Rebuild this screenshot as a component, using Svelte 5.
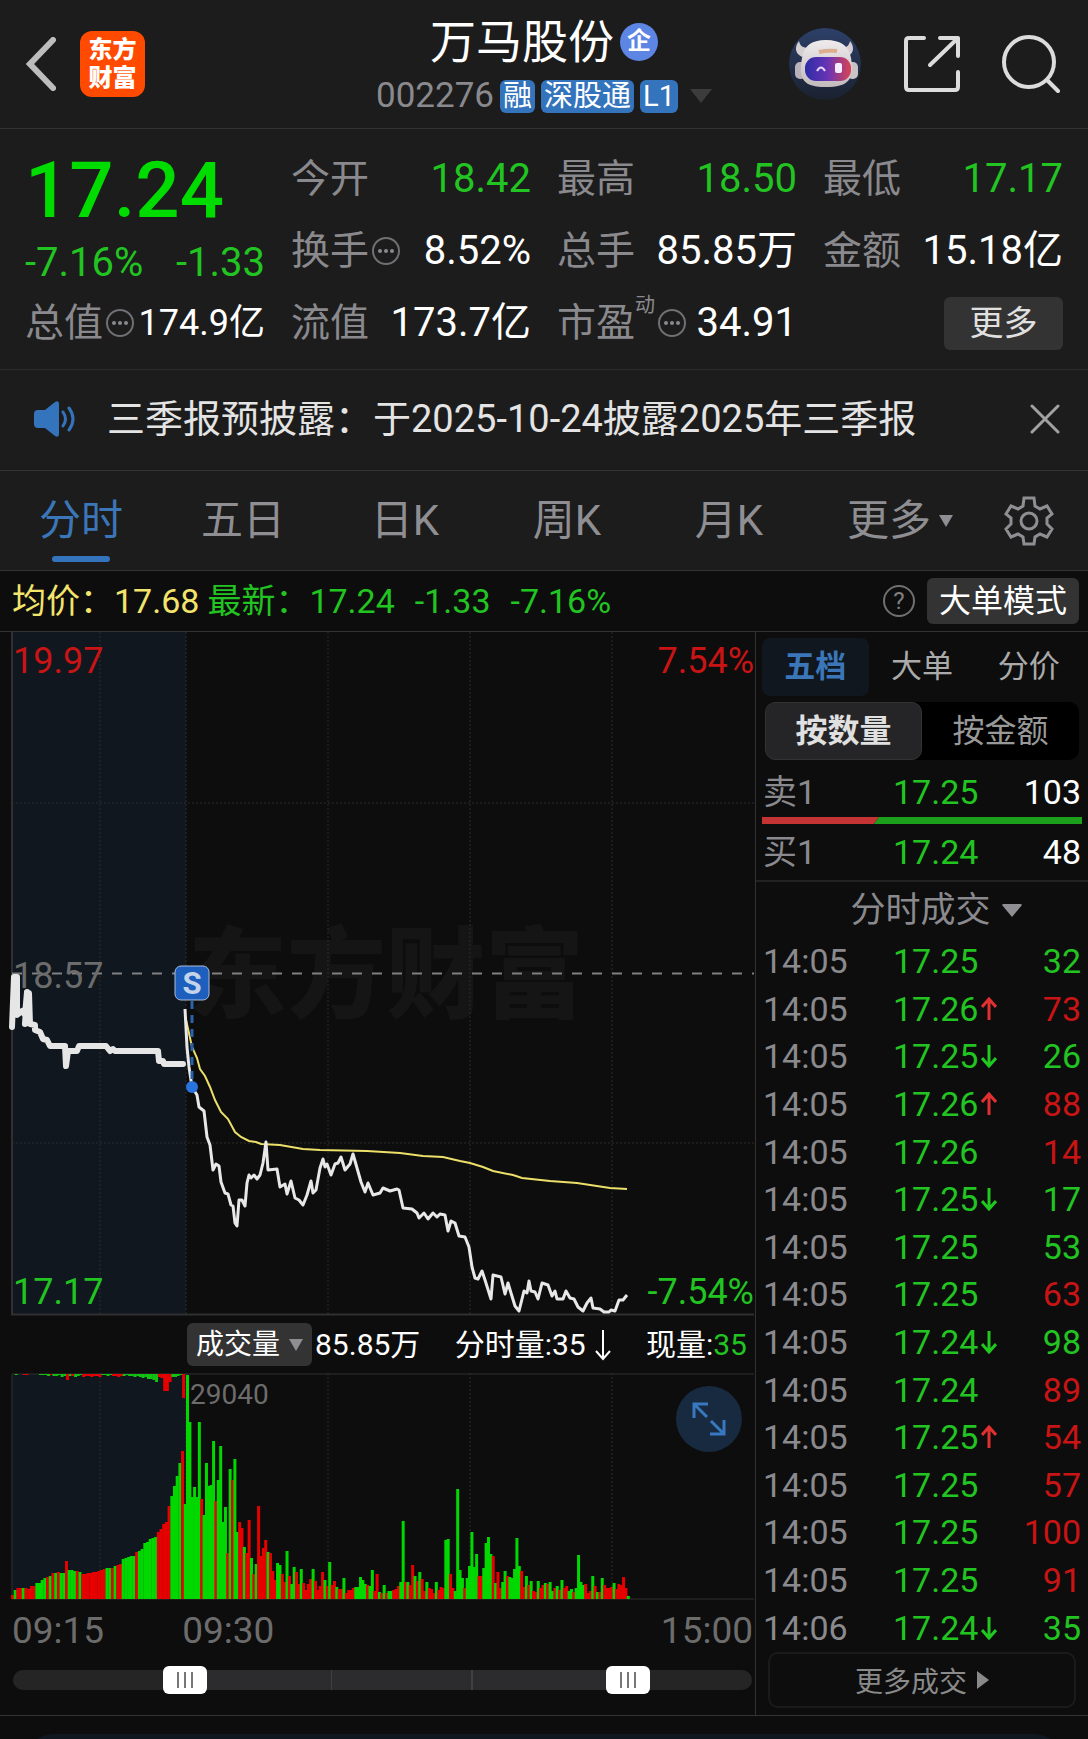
<script>
  // prices below yesterday's close are green, above are red
  const stats = [
    { label: "今开", value: "18.42", down: true },
    { label: "最高", value: "18.50", down: true },
    { label: "最低", value: "17.17", down: true },
    { label: "换手", value: "8.52%", info: true },
    { label: "总手", value: "85.85万" },
    { label: "金额", value: "15.18亿" },
    { label: "总值", value: "174.9亿", info: true, small: true },
    { label: "流值", value: "173.7亿" },
    { label: "市盈", value: "34.91", info: true, sup: "动" },
  ];

  const periods = ["分时", "五日", "日K", "周K", "月K"];
  let period = "分时";

  const bookTabs = ["五档", "大单", "分价"];
  let bookTab = "五档";
  let unit = "按数量";

  // dir: arrow beside the price, side: colour of the quantity
  const trades = [
    { t: "14:05", p: "17.25", q: 32, side: "g" },
    { t: "14:05", p: "17.26", q: 73, side: "r", dir: "up" },
    { t: "14:05", p: "17.25", q: 26, side: "g", dir: "down" },
    { t: "14:05", p: "17.26", q: 88, side: "r", dir: "up" },
    { t: "14:05", p: "17.26", q: 14, side: "r" },
    { t: "14:05", p: "17.25", q: 17, side: "g", dir: "down" },
    { t: "14:05", p: "17.25", q: 53, side: "g" },
    { t: "14:05", p: "17.25", q: 63, side: "r" },
    { t: "14:05", p: "17.24", q: 98, side: "g", dir: "down" },
    { t: "14:05", p: "17.24", q: 89, side: "r" },
    { t: "14:05", p: "17.25", q: 54, side: "r", dir: "up" },
    { t: "14:05", p: "17.25", q: 57, side: "r" },
    { t: "14:05", p: "17.25", q: 100, side: "r" },
    { t: "14:05", p: "17.25", q: 91, side: "r" },
    { t: "14:06", p: "17.24", q: 35, side: "g", dir: "down" },
  ];

  const auctionLine = "12,395 14,345 17,345 17,383 22,379 25,383 27,360 25,392 29,361 30,392 35,393 35,398 40,400 43,407 47,408 50,414 65,414 66,434 68,419 77,419 79,414 106,414 110,419 113,417 115,419 158,419 159,429 163,429 164,432 183,432";
  const priceLine = "185,377 187,415 189,435 192,455 197,463 199,475 204,479 207,505 210,513 213,538 216,532 219,534 221,550 225,561 228,562 231,573 233,574 235,591 237,594 239,568 242,568 245,574 247,551 249,543 251,546 254,543 257,547 260,543 263,531 266,510 268,538 277,537 280,555 285,552 287,562 291,549 295,566 299,568 303,573 307,563 311,549 313,561 316,558 320,536 323,527 325,535 327,532 331,543 335,532 338,531 341,525 345,538 350,532 353,522 357,536 361,550 365,560 368,551 373,563 380,561 383,556 390,559 397,557 399,558 403,576 412,577 417,581 419,586 424,581 428,587 433,581 437,585 440,582 445,583 448,599 451,589 455,591 459,604 465,605 469,615 472,635 475,646 478,647 482,639 485,648 491,667 493,643 501,645 505,662 508,651 511,661 515,674 519,679 524,659 527,661 529,649 531,659 535,660 538,667 542,651 548,653 552,664 555,659 557,667 563,667 566,659 570,666 574,667 578,675 583,679 587,671 591,666 593,676 600,677 604,680 609,680 611,678 615,679 619,668 623,668 627,663";
  const avgLine = "185,383 192,415 197,426 200,437 205,444 210,455 215,468 221,480 228,487 235,500 241,505 249,509 256,510 261,512 280,513 303,517 320,518 367,519 400,521 423,524 443,525 460,529 470,531 483,535 493,539 513,543 522,546 550,549 577,551 610,556 627,557";

  // colour letter + bar height
  const auctionVol = "r4 g9 r11 r11 g11 r11 r10 r13 r13 g16 g16 g19 g21 r22 g23 r26 g26 r27 g26 g26 r38 g29 g29 g28 r28 g27 r25 r25 r26 r26 r27 r27 r28 r29 r30 g31 g31 r31 g33 r34 r35 g40 g41 g42 g43 g43 r47 g48 g50 g56 g57 g60 g61 g62 r67 r70 r75 r77 r93 g103 g113 g123 g136 r148 g95";
  const auctionLeft = "g0 g1 g0 g0 r1 r1 g0 g0 g0 g0 g1 g1 g1 g2 r1 g2 g2 g1 g3 g2 r6 g2 r2 g3 g2 g1 r3 r2 r2 r3 r2 r2 r3 g1 g1 g2 g1 r2 r2 r3 r2 g2 g1 g2 g2 g3 g2 g3 g4 g3 g5 g5 g6 g8 r3 r4 r17 r17 r8 g3 g3 g2 g1 r24";
  const minuteVol = "g224 g177 g102 g112 g102 g177 r100 g84 g136 g113 g114 g158 r98 g119 g153 g77 g92 r46 g130 r119 g140 g67 r77 r71 g52 r46 r79 g41 r25 g35 r93 r43 r51 r59 g47 r46 r28 r19 g36 g34 r25 r17 g48 r23 g15 g32 r27 r15 g30 r16 r9 r15 r20 g30 r18 r9 r13 r27 g19 r13 g37 r14 r18 g12 r10 r10 g21 r6 r9 r9 r11 g12 g12 g22 g19 g15 r14 g13 g29 r8 r25 g7 r6 g14 r6 g8 g8 r9 r10 r13 g17 g78 r17 g17 r14 r34 g23 r18 g27 r20 r8 g17 r11 r10 r6 g17 r9 r12 r11 g59 g60 r25 r11 g8 g110 g29 g21 r11 g21 g33 g67 g32 g45 r23 r23 g31 g56 g62 g45 r43 g16 r27 r11 g17 g28 r23 g22 g21 g30 g61 g33 r28 r12 g23 r14 g18 r8 r7 g18 r11 r14 g16 r15 g17 g8 r11 g13 r9 g19 r11 r13 g8 g10 r7 g11 g44 g17 g14 r15 r6 r8 g23 r13 g7 r7 g21 r14 r11 r11 r12 g16 r10 r15 r14 r22 r11 g3";

  const bars = (src, x0, step) =>
    src.split(" ").map((s, i) => ({ x: x0 + i * step, h: +s.slice(1), c: s[0] }));

  const upper = bars(auctionLeft, 12, 2.7);
  const lower = [...bars(auctionVol, 11, 2.7), ...bars(minuteVol, 186, 2.37)];
  const gridX = [100, 186, 328, 470, 612];

  let from = 216;
  let to = 853;
</script>

<div class="app">
  <header class="top">
    <div class="top-left">
      <button class="icon-btn" aria-label="返回">
        <svg width="30" height="54" viewBox="0 0 30 54"><path d="M27 3 4 27l23 24" fill="none" stroke="#bdbdbd" stroke-width="6" stroke-linecap="round" /></svg>
      </button>
      <a class="logo" href="#home"><span>东方</span><span>财富</span></a>
    </div>
    <div class="top-mid">
      <h1>万马股份<span class="qi">企</span></h1>
      <div class="code">
        <span>002276</span>
        <span class="tag">融</span>
        <span class="tag">深股通</span>
        <span class="tag">L1</span>
        <svg class="code-caret" width="22" height="14" viewBox="0 0 22 14"><path d="M0 0h22L11 14z" fill="#3c3c3c" /></svg>
      </div>
    </div>
    <div class="top-right">
      <button class="icon-btn" aria-label="助手">
        <svg width="73" height="73" viewBox="0 0 73 73">
          <defs>
            <linearGradient id="sky" x1="0" y1="0" x2="0" y2="1"><stop offset="0" stop-color="#2d4068" /><stop offset="1" stop-color="#1a2130" /></linearGradient>
            <linearGradient id="visor" x1="0" y1="0" x2="1" y2="0"><stop offset="0" stop-color="#2c2ca6" /><stop offset=".5" stop-color="#6a34b4" /><stop offset="1" stop-color="#d84452" /></linearGradient>
            <linearGradient id="shell" x1="0" y1="0" x2="0" y2="1"><stop offset="0" stop-color="#efebec" /><stop offset="1" stop-color="#c2babd" /></linearGradient>
          </defs>
          <circle cx="36" cy="36" r="36" fill="url(#sky)" />
          <path d="M10 13c-4 5-5 12 3 16l7-9c-6 0-9-2-10-7zM61 13c4 5 5 12-3 16l-7-9c6 0 9-2 10-7z" fill="#d5cfd3" />
          <rect x="6" y="34" width="11" height="17" rx="5" fill="#b9b2b8" />
          <rect x="58" y="34" width="11" height="17" rx="5" fill="#c9c3c8" />
          <path d="M37 12c15 0 23 6 25 18 4 22-3 29-25 29S9 52 13 30c2-12 9-18 24-18z" fill="url(#shell)" />
          <rect x="16" y="29" width="46" height="24" rx="11" fill="url(#visor)" />
          <path d="M30 24q9-2 18-1" stroke="#dcae90" stroke-width="4" fill="none" />
          <path d="M28 43q4-7 8 0" stroke="#e6d8ff" stroke-width="2" fill="none" />
          <rect x="46" y="35" width="7" height="10" rx="2" fill="#f4ecff" />
        </svg>
      </button>
      <button class="icon-btn" aria-label="分享">
        <svg width="56" height="56" viewBox="0 0 56 56" fill="none" stroke="#dcdcdc" stroke-width="4" stroke-linecap="round" stroke-linejoin="round"><path d="M20 2H5q-3 0-3 3v46q0 3 3 3h46q3 0 3-3V36" /><path d="M36 2h18v18M53 3 26 29" /></svg>
      </button>
      <button class="icon-btn" aria-label="搜索">
        <svg width="58" height="58" viewBox="0 0 58 58" fill="none" stroke="#dcdcdc" stroke-width="4" stroke-linecap="round"><circle cx="27" cy="27" r="25" /><path d="m45 45 11 11" /></svg>
      </button>
    </div>
  </header>

  <section class="stats">
    <div class="now">
      <strong>17.24</strong>
      <div class="change"><span>-7.16%</span><span>-1.33</span></div>
    </div>
    {#each stats as s}
      <div class="stat" class:small={s.small}>
        <span class="label">
          {s.label}{#if s.sup}<sup>{s.sup}</sup>{/if}
          {#if s.info}
            <svg class="info" width="30" height="30" viewBox="0 0 30 30"><circle cx="15" cy="15" r="13" fill="none" stroke="#707074" stroke-width="2" /><g fill="#8a8a8e"><circle cx="9" cy="15" r="2" /><circle cx="15" cy="15" r="2" /><circle cx="21" cy="15" r="2" /></g></svg>
          {/if}
        </span>
        <span class="value" class:down={s.down}>{s.value}</span>
      </div>
    {/each}
    <button class="more-stats">更多</button>
  </section>

  <section class="notice">
    <svg width="44" height="36" viewBox="0 0 44 36"><path d="M5 9h7L22 1q4-2 4 2v30q0 4-4 2l-10-8H5q-4 0-4-4V13q0-4 4-4z" fill="#3474bd" /><path d="M30 11q5 7 0 14M36 7q8 11 0 22" fill="none" stroke="#3474bd" stroke-width="3" stroke-linecap="round" /></svg>
    <p>三季报预披露：于2025-10-24披露2025年三季报</p>
    <button class="icon-btn" aria-label="关闭">
      <svg width="30" height="30" viewBox="0 0 30 30"><path d="m2 2 26 26M28 2 2 28" stroke="#a2a2a2" stroke-width="3" stroke-linecap="round" /></svg>
    </button>
  </section>

  <nav class="periods">
    {#each periods as p}
      <button class:on={p === period} on:click={() => (period = p)}>{p}</button>
    {/each}
    <button class="more">更多<svg width="14" height="12" viewBox="0 0 14 12"><path d="M0 0h14L7 12z" fill="#8e8e93" /></svg></button>
    <button class="gear" aria-label="设置">
      <svg width="50" height="50" viewBox="0 0 50 50" fill="none" stroke="#8e8e93" stroke-width="3">
        <path d="M20 2h10l1 8 5 3 7-3 5 8-5 4v6l5 5-5 8-7-3-5 3-1 7H20l-1-7-5-3-7 3-5-8 5-5v-6l-5-4 5-8 7 3 5-3z" />
        <circle cx="25" cy="25" r="8" />
      </svg>
    </button>
  </nav>

  <section class="quote">
    <span class="avg">均价：17.68</span>
    <span class="last">最新：17.24</span>
    <span class="last delta">-1.33</span>
    <span class="last delta">-7.16%</span>
    <button class="help" aria-label="说明">?</button>
    <button class="big-order">大单模式</button>
  </section>

  <main>
    <div class="charts">
      <svg class="chart" viewBox="0 0 755 684">
        <rect x="12" y="0" width="174" height="682" fill="#10171e" />
        <text class="mark" x="188" y="378">东方财富</text>
        {#each gridX as x}
          <line class="dots" x1={x} x2={x} y1="0" y2="682" />
        {/each}
        <line class="dots" x1="12" x2="754" y1="171" y2="171" />
        <line class="dots" x1="12" x2="754" y1="511" y2="511" />
        <path d="M12 0v682.500h742" fill="none" stroke="#303032" stroke-width="2" />
        <line x1="12" x2="754" y1="341.500" y2="341.500" stroke="#808080" stroke-width="2" stroke-dasharray="10 10" />
        <text class="axis grey" x="13" y="356">18.57</text>
        <polyline points={auctionLine} fill="none" stroke="#e6e6e6" stroke-width="6" stroke-linecap="round" stroke-linejoin="round" />
        <polyline points={avgLine} fill="none" stroke="#ece06a" stroke-width="2" />
        <polyline points={priceLine} fill="none" stroke="#e8e8e8" stroke-width="3" stroke-linejoin="round" />
        <line x1="192" x2="192" y1="369" y2="450" stroke="#2a62ad" stroke-width="3" stroke-dasharray="8 6" />
        <circle cx="192" cy="455" r="6" fill="#2873dc" />
        <rect x="175" y="334" width="34" height="34" rx="6" fill="#1e5fbe" stroke="#a9bddb" stroke-width="1" />
        <text class="sell" x="192" y="362">S</text>
        <text class="axis red" x="13" y="41">19.97</text>
        <text class="axis red end" x="754" y="41">7.54%</text>
        <text class="axis green" x="13" y="672">17.17</text>
        <text class="axis green end" x="754" y="672">-7.54%</text>
      </svg>

      <div class="vol-head">
        <label class="vol-pick">
          <select aria-label="指标"><option>成交量</option></select>
          <svg width="14" height="12" viewBox="0 0 14 12"><path d="M0 0h14L7 12z" fill="#8e8e93" /></svg>
        </label>
        <span>85.85万</span>
        <span class="minute">分时量:35<svg width="18" height="32" viewBox="0 0 18 32"><path d="M9 1v28M2 22l7 8 7-8" fill="none" stroke="#fff" stroke-width="2" /></svg></span>
        <span class="cur">现量:<b>35</b></span>
      </div>

      <div class="vol">
        <svg class="chart" viewBox="0 0 755 227">
          <rect x="12" y="1" width="174" height="225" fill="#10171e" />
          {#each gridX as x}
            <line class="dots" x1={x} x2={x} y1="0" y2="226" />
          {/each}
          <path d="M12 226V1h742M12 226h742" fill="none" stroke="#303032" stroke-width="1" />
          {#each upper as b}
            <rect x={b.x} y="1" width="3" height={b.h} fill={b.c === "r" ? "#e60000" : "#12c412"} />
          {/each}
          {#each lower as b}
            <rect x={b.x} y={226 - b.h} width="3" height={b.h} fill={b.c === "r" ? "#e60000" : "#00d800"} />
          {/each}
          <text class="peak" x="190" y="31">29040</text>
        </svg>
        <button class="expand" aria-label="全屏">
          <svg width="34" height="34" viewBox="0 0 34 34" fill="none" stroke="#3878c0" stroke-width="3"><path d="M2 16V2h14M2 2l13 13M32 18v14H18M32 32 19 19" /></svg>
        </button>
      </div>

      <div class="times"><span>09:15</span><span>09:30</span><span>15:00</span></div>

      <div class="range">
        <input type="range" min="0" max="1000" bind:value={from} aria-label="起始时间" />
        <input type="range" min="0" max="1000" bind:value={to} aria-label="结束时间" />
      </div>
    </div>

    <aside>
      <div class="book-tabs">
        {#each bookTabs as b}
          <button class:on={b === bookTab} on:click={() => (bookTab = b)}>{b}</button>
        {/each}
      </div>
      <div class="units">
        {#each ["按数量", "按金额"] as u}
          <button class:on={u === unit} on:click={() => (unit = u)}>{u}</button>
        {/each}
      </div>
      <div class="level"><span>卖1</span><span class="p">17.25</span><span class="q">103</span></div>
      <svg class="ratio" viewBox="0 0 320 7"><path d="M0 0h117l-5 7H0z" fill="#c43434" /><path d="M117 0h203v7H112z" fill="#1ca01c" /></svg>
      <div class="level"><span>买1</span><span class="p">17.24</span><span class="q">48</span></div>
      <label class="trade-pick">
        <select aria-label="成交类型"><option>分时成交</option></select>
        <svg width="20" height="13" viewBox="0 0 20 13"><path d="M1 0h18l1 1-10 12L0 1z" fill="#8e8e93" /></svg>
      </label>
      <table>
        <tbody>
          {#each trades as t}
            <tr>
              <td class="t">{t.t}</td>
              <td class="p">
                {t.p}{#if t.dir}<svg width="16" height="24" viewBox="0 0 16 24" fill="none" stroke-width="3" stroke={t.dir === "up" ? "#e03030" : "#20c820"}><path d={t.dir === "up" ? "M8 23V3M1 10l7-8 7 8" : "M8 1v20M1 14l7 8 7-8"} /></svg>{/if}
              </td>
              <td class="q {t.side}">{t.q}</td>
            </tr>
          {/each}
        </tbody>
      </table>
      <button class="more-trades">更多成交<svg width="12" height="18" viewBox="0 0 12 18"><path d="M0 0v18l12-9z" fill="#8a8a8a" /></svg></button>
    </aside>
  </main>

  <footer><div class="sheet"></div></footer>
</div>

<style>
  :global(body) { background: #0d0d0d; }
  .app { font-family: Roboto, "Noto Sans CJK SC", sans-serif; color: #fff; background: #0d0d0d; overflow: hidden; }
  button, select { font: inherit; color: inherit; background: none; border: none; padding: 0; margin: 0; cursor: pointer; }
  svg { display: block; flex: none; }
  .icon-btn { display: flex; }

  .top { display: grid; grid-template-columns: 1fr auto 1fr; align-items: center; height: 128px; background: #1c1c1c; border-bottom: 1px solid #333; }
  .top-left { display: flex; align-items: center; gap: 24px; padding-left: 26px; }
  .logo { display: flex; flex-direction: column; align-items: center; justify-content: center; width: 65px; height: 66px; border-radius: 12px; background: #ff4a00; color: #fff; font-size: 24px; font-weight: 900; line-height: 28px; text-decoration: none; }
  .top-mid { display: flex; flex-direction: column; align-items: center; gap: 10px; }
  h1 { display: flex; align-items: center; gap: 6px; margin: 0; font-size: 46px; font-weight: 400; line-height: 54px; }
  .qi { width: 38px; height: 38px; border-radius: 50%; background: #5d86e4; font-size: 24px; font-weight: 700; line-height: 36px; text-align: center; }
  .code { display: flex; align-items: center; gap: 6px; color: #8a8a8e; font-size: 35px; line-height: 34px; }
  .tag { padding: 0 3px; border-radius: 6px; background: #3474bd; color: #fff; font-size: 29px; line-height: 33px; }
  .code-caret { margin-left: 6px; }
  .top-right { display: flex; align-items: center; justify-content: flex-end; gap: 42px; padding-right: 28px; }

  .stats { display: grid; grid-template-columns: repeat(4, 1fr); grid-auto-rows: 72px; column-gap: 26px; padding: 14px 25px 10px; background: #1c1c1c; border-bottom: 1px solid #2c2c2c; font-size: 40px; line-height: 72px; }
  .now { grid-row: span 2; display: flex; flex-direction: column; }
  .now strong { color: #00dc00; font-size: 78px; font-weight: 500; line-height: 96px; }
  .change { display: flex; justify-content: space-between; color: #22c422; line-height: 48px; }
  .stat { display: flex; justify-content: space-between; align-items: center; white-space: nowrap; }
  .label { display: flex; align-items: center; color: #8a8a8e; font-size: 39px; }
  .label sup { align-self: flex-start; font-size: 20px; line-height: 36px; }
  .info { margin-left: 2px; }
  .small .value { font-size: 36px; }
  .down { color: #22c422; }
  .more-stats { justify-self: end; align-self: center; width: 119px; height: 53px; border-radius: 6px; background: #333; color: #e0e0e0; font-size: 34px; line-height: 50px; }

  .notice { display: flex; align-items: center; gap: 30px; height: 98px; padding: 0 28px 2px 33px; background: #1c1c1c; border-bottom: 1px solid #333; }
  .notice p { flex: 1; margin: 0; color: #e4e4e4; font-size: 38px; line-height: 48px; white-space: nowrap; }

  .periods { display: flex; height: 99px; background: #1c1c1c; border-bottom: 1px solid #333; color: #8e8e93; font-size: 42px; }
  .periods button { position: relative; flex: 1; line-height: 100px; }
  .periods .on { color: #3b76b8; }
  .periods .on::after { content: ""; position: absolute; left: 50%; bottom: 8px; width: 58px; height: 6px; margin-left: -29px; border-radius: 3px; background: #3474bd; }
  .periods .more { flex: 0 0 180px; display: flex; align-items: center; justify-content: center; gap: 8px; }
  .periods .gear { flex: 0 0 98px; display: flex; align-items: center; justify-content: center; padding-right: 20px; }

  .quote { display: flex; align-items: center; height: 60px; padding: 0 9px 0 12px; border-bottom: 1px solid #333; font-size: 34px; line-height: 60px; white-space: nowrap; }
  .avg { color: #f3e46c; margin-right: 8px; }
  .last { color: #22c422; }
  .delta { margin-left: 20px; }
  .help { width: 32px; height: 32px; margin-left: auto; margin-right: 12px; border: 2px solid #707070; border-radius: 50%; color: #808080; font-size: 24px; line-height: 28px; }
  .big-order { height: 46px; padding: 0 12px; border-radius: 6px; background: #333; font-size: 32px; line-height: 44px; }

  main { display: grid; grid-template-columns: minmax(0, 1fr) 333px; border-bottom: 1px solid #333; }
  .chart { width: 100%; height: auto; }
  .dots { stroke: #2c2c2e; stroke-width: 1; stroke-dasharray: 2 2; }
  .mark { fill: #151515; font-size: 99px; font-weight: 900; }
  .axis { font-size: 36px; }
  .end { text-anchor: end; }
  .red { fill: #c81414; }
  .green { fill: #22c422; }
  .grey, .peak { fill: #6c6c6c; }
  .peak { font-size: 28px; }
  .sell { fill: #c3d3ea; font-size: 31px; font-weight: 700; text-anchor: middle; }

  .vol-head { display: flex; align-items: center; height: 57px; padding: 0 8px 0 187px; font-size: 30px; line-height: 40px; white-space: nowrap; }
  .vol-pick { display: flex; align-items: center; gap: 8px; height: 43px; padding: 0 9px; margin-right: 3px; border-radius: 6px; background: #333; font-size: 28px; }
  select { appearance: none; outline: none; }
  .minute { display: flex; align-items: center; gap: 8px; margin-left: auto; }
  .cur { margin-left: auto; }
  .cur b { color: #22c422; font-weight: 400; }
  .vol { position: relative; }
  .expand { position: absolute; top: 13px; right: 13px; display: flex; align-items: center; justify-content: center; width: 66px; height: 66px; border-radius: 50%; background: #182a40; }

  .times { display: flex; gap: 78px; padding: 0 2px 0 12px; color: #6c6c6c; font-size: 37px; line-height: 61px; }
  .times span:last-child { margin-left: auto; }
  .range { display: grid; align-items: center; height: 28px; margin: 5px 3px 21px 13px; }
  .range::before {
    content: ""; grid-area: 1 / 1; height: 20px; border-radius: 10px;
    background: linear-gradient(90deg, #252525 22%, #2c2c2e 22% 43%, #404042 43% 43.2%, #2c2c2e 43.2% 62%, #404042 62% 62.2%, #2c2c2e 62.2% 84%, #252525 84%);
  }
  .range input { grid-area: 1 / 1; appearance: none; width: 100%; height: 28px; margin: 0; background: none; pointer-events: none; }
  .range input::-webkit-slider-thumb {
    appearance: none; width: 44px; height: 28px; border-radius: 6px; pointer-events: auto;
    background: linear-gradient(90deg, #777 2px, transparent 2px 7px, #777 7px 9px, transparent 9px 14px, #777 14px) center / 16px 16px no-repeat #fff;
  }

  aside { display: flex; flex-direction: column; padding: 6px 6px 7px; border-left: 1px solid #333; font-size: 34px; }
  .book-tabs { display: grid; grid-template-columns: repeat(3, 1fr); height: 58px; color: #aaa; font-size: 31px; }
  .book-tabs button { line-height: 58px; border-radius: 8px; }
  .book-tabs .on { background: #10171e; color: #3b76b8; font-weight: 700; }
  .units { display: grid; grid-template-columns: 1fr 1fr; height: 58px; margin: 6px 3px; border-radius: 10px; background: #000; color: #999; font-size: 32px; }
  .units button { line-height: 56px; border-radius: 10px; border: 1px solid transparent; }
  .units .on { background: #252527; border-color: #333; color: #e0e0e0; font-weight: 700; }
  .level { display: grid; grid-template-columns: 130px 1fr auto; padding: 1px 1px 0; color: #8a8a8e; line-height: 50px; }
  .level + .ratio + .level { padding-top: 3px; margin-bottom: -2px; }
  .level .p { color: #22c422; }
  .level .q { color: #fff; }
  .ratio { width: 100%; height: 7px; }
  .trade-pick { display: flex; align-items: center; justify-content: center; gap: 10px; height: 56px; margin: 5px -6px 0; padding-left: 28px; border-top: 2px solid #222; color: #8a8a8e; font-size: 35px; }
  table { flex: 1; width: 100%; border-collapse: collapse; line-height: 47px; }
  td { padding: 0 1px; }
  .t { width: 128px; color: #8a8a8e; }
  td.p { color: #22c422; white-space: nowrap; }
  td.p svg { display: inline-block; margin-left: 3px; }
  td.q { text-align: right; }
  .q.g { color: #22c422; }
  .q.r { color: #c81414; }
  .more-trades { display: flex; align-items: center; justify-content: center; gap: 10px; height: 56px; margin: 0 6px; border: 2px solid #1b1b1b; border-radius: 10px; color: #8a8a8a; font-size: 28px; }

  footer { height: 23px; padding-top: 18px; box-sizing: border-box; overflow: hidden; }
  .sheet { height: 60px; margin: 0 24px; border-radius: 30px; background: #10171e; }
</style>
